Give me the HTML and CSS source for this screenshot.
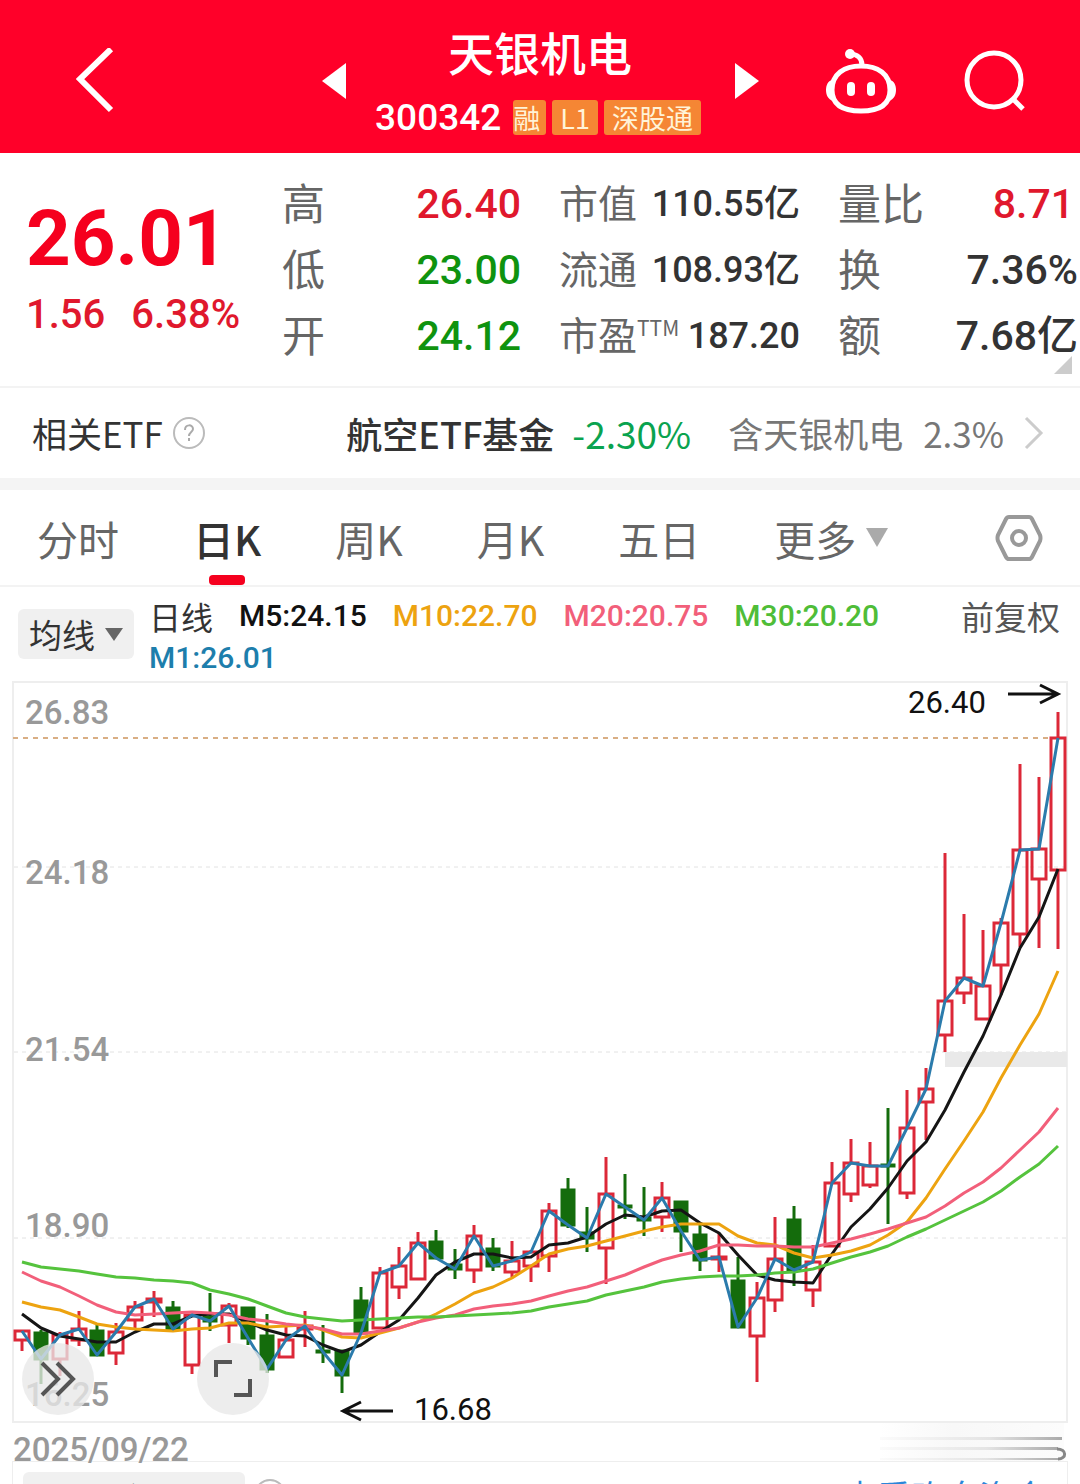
FILE: index.html
```html
<!DOCTYPE html>
<html lang="zh-CN">
<head>
  <meta charset="UTF-8">
  <meta name="viewport" content="width=device-width, initial-scale=1">
  <title>天银机电 300342</title>
  <link rel="stylesheet" href="styles.css">
</head>
<body>

  <header class="topbar">
    <div class="topbar-left">
      <button class="icon-btn" aria-label="返回">
        <svg width="40" height="66" viewBox="0 0 40 66"><path d="M35 1 L4 31 L35 62" fill="none" stroke="#fff" stroke-width="6"/></svg>
      </button>
    </div>
    <button class="icon-btn" aria-label="上一只">
      <svg width="24" height="36" viewBox="0 0 24 36"><path d="M24 0 V36 L0 18 Z" fill="#fff"/></svg>
    </button>
    <div class="stock">
      <h1 class="stock-name">天银机电</h1>
      <div class="stock-code">
        <span class="code">300342</span>
        <span class="badge badge-cut">融</span>
        <span class="badge">L1</span>
        <span class="badge">深股通</span>
      </div>
    </div>
    <button class="icon-btn" aria-label="下一只">
      <svg width="24" height="36" viewBox="0 0 24 36"><path d="M0 0 V36 L24 18 Z" fill="#fff"/></svg>
    </button>
    <div class="topbar-right">
      <button class="icon-btn" aria-label="智能助手">
        <svg width="70" height="68" viewBox="0 0 70 68">
          <path d="M24 7 C31 7 36 11 36 18" fill="none" stroke="#fff" stroke-width="5"/>
          <circle cx="24" cy="7" r="5" fill="#fff"/>
          <path d="M35 19 C52 19 64 27 64 43 C64 58 53 64 35 64 C17 64 6 58 6 43 C6 27 18 19 35 19 Z" fill="none" stroke="#fff" stroke-width="5"/>
          <path d="M6 33 C2 34 0 38 0 43 C0 48 2 52 7 54 Z M64 33 C68 34 70 38 70 43 C70 48 68 52 63 54 Z" fill="#fff"/>
          <rect x="21" y="35" width="8" height="14" rx="4" fill="#fff"/>
          <rect x="41" y="35" width="8" height="14" rx="4" fill="#fff"/>
        </svg>
      </button>
      <button class="icon-btn" aria-label="搜索">
        <svg width="62" height="64" viewBox="0 0 62 64">
          <circle cx="30" cy="31" r="27" fill="none" stroke="#fff" stroke-width="5"/>
          <path d="M48 49 L59 60" stroke="#fff" stroke-width="5"/>
        </svg>
      </button>
    </div>
  </header>

  <section class="quote">
    <div class="price">
      <strong class="price-now">26.01</strong>
      <div class="price-change"><span>1.56</span><span>6.38%</span></div>
    </div>
    <dl class="facts">
      <div><dt>高</dt><dd class="up">26.40</dd></div>
      <div><dt>低</dt><dd class="down">23.00</dd></div>
      <div><dt>开</dt><dd class="down">24.12</dd></div>
    </dl>
    <dl class="facts facts-small">
      <div><dt>市值</dt><dd>110.55亿</dd></div>
      <div><dt>流通</dt><dd>108.93亿</dd></div>
      <div><dt>市盈<sup>TTM</sup></dt><dd>187.20</dd></div>
    </dl>
    <dl class="facts">
      <div><dt>量比</dt><dd class="up ratio">8.71</dd></div>
      <div><dt>换</dt><dd>7.36%</dd></div>
      <div><dt>额</dt><dd>7.68亿</dd></div>
    </dl>
    <span class="corner"></span>
  </section>

  <a class="etf" href="#etf">
    <span class="etf-title">相关ETF
      <svg width="32" height="32" viewBox="0 0 32 32">
        <circle cx="16" cy="16" r="15" fill="none" stroke="#bbb" stroke-width="2"/>
        <path d="M12 13 C12 7 20 7 20 12 C20 15 16 15 16 19 M16 21 V24" fill="none" stroke="#aaa" stroke-width="2"/>
      </svg>
    </span>
    <span class="etf-name">航空ETF基金</span>
    <span class="etf-change">-2.30%</span>
    <span class="etf-hold"><span>含天银机电</span><span>2.3%</span></span>
    <svg class="etf-arrow" width="20" height="34" viewBox="0 0 20 34"><path d="M2 2 L17 17 L2 32" fill="none" stroke="#ccc" stroke-width="3"/></svg>
  </a>

  <nav class="tabs">
    <button class="tab">分时</button>
    <button class="tab active">日K</button>
    <button class="tab">周K</button>
    <button class="tab">月K</button>
    <button class="tab">五日</button>
    <button class="tab">更多
      <svg width="22" height="19" viewBox="0 0 22 19"><path d="M0 0 H22 L11 19 Z" fill="#aaa"/></svg>
    </button>
    <button class="icon-btn settings" aria-label="设置">
      <svg width="48" height="48" viewBox="0 0 48 48" fill="none" stroke="#999" stroke-width="4">
        <path d="M14 3 H34 Q36 3 37 5 L45 21 Q46 24 45 27 L37 43 Q36 45 34 45 H14 Q12 45 11 43 L3 27 Q2 24 3 21 L11 5 Q12 3 14 3 Z"/>
        <circle cx="24" cy="24" r="7"/>
      </svg>
    </button>
  </nav>

  <section class="ma-bar">
    <button class="ma-select">均线
      <svg width="18" height="13" viewBox="0 0 18 13"><path d="M0 0 H18 L9 13 Z" fill="#666"/></svg>
    </button>
    <div class="ma-list">
      <span class="ma-period">日线</span>
      <span class="m5">M5:24.15</span>
      <span class="m10">M10:22.70</span>
      <span class="m20">M20:20.75</span>
      <span class="m30">M30:20.20</span>
      <span class="m1">M1:26.01</span>
    </div>
    <button class="adjust">前复权</button>
  </section>

  <section class="chart-box">
    <svg class="chart" id="chart" viewBox="0 682 1080 741" role="img" aria-label="日K线图"></svg>
    <button class="float-btn float-more" aria-label="展开">
      <svg width="36" height="36" viewBox="0 0 36 36"><path d="M2 2 L18 18 L2 34 M17 2 L33 18 L17 34" fill="none" stroke="#555" stroke-width="4"/></svg>
    </button>
    <button class="float-btn float-full" aria-label="全屏">
      <svg width="38" height="38" viewBox="0 0 38 38"><path d="M2 17 V2 H18 M36 19 V35 H20" fill="none" stroke="#555" stroke-width="4"/></svg>
    </button>
  </section>

  <div class="date-row">
    <span>2025/09/22</span>
    <svg width="188" height="38" viewBox="0 0 188 38">
      <defs>
        <linearGradient id="haze"><stop offset="0" stop-color="#fff"/><stop offset="0.4" stop-color="#f8f8f8"/><stop offset="1" stop-color="#fcfcfc"/></linearGradient>
        <linearGradient id="streak"><stop offset="0" stop-color="#fbfbfb"/><stop offset="0.6" stop-color="#e4e4e4"/><stop offset="1" stop-color="#aaa"/></linearGradient>
      </defs>
      <rect width="184" height="38" fill="url(#haze)"/>
      <rect y="14" width="182" height="3" fill="url(#streak)"/>
      <rect y="24" width="178" height="3" fill="url(#streak)"/>
      <rect y="35" width="178" height="2" fill="url(#streak)"/>
      <path d="M177 26 C187 26 187 36 178 36" fill="none" stroke="#888" stroke-width="3"/>
    </svg>
  </div>

  <section class="volume">
    <button class="volume-select">成交量</button>
    <svg width="34" height="34" viewBox="0 0 34 34"><circle cx="17" cy="17" r="15" fill="none" stroke="#bbb" stroke-width="2"/></svg>
    <a class="volume-link" href="#funds">查看昨息资金</a>
  </section>

  <script src="chart.js"></script>
</body>
</html>
```
FILE: styles.css
```css
* {
  box-sizing: border-box;
}
body {
  margin: 0;
  height: 100vh;
  overflow: hidden;
  background-color: #fff;
  color: #333;
  font-family: "Noto Sans CJK SC", sans-serif;
}
button {
  border: none;
  background: none;
  padding: 0;
  color: inherit;
  font: inherit;
  cursor: pointer;
}
a {
  color: inherit;
  text-decoration: none;
}
svg {
  display: block;
}
.up {
  color: #e0182d;
}
.down {
  color: #0f930f;
}

/* top bar */
.topbar {
  display: grid;
  grid-template-columns: 1fr 48px 365px 48px 1fr;
  align-items: center;
  height: 153px;
  padding-top: 8px;
  background-color: #ff0029;
  color: #fff;
}
.icon-btn {
  display: flex;
  align-items: center;
  justify-content: center;
}
.topbar-left {
  padding-left: 76px;
}
.topbar-right {
  display: flex;
  align-items: center;
  justify-content: flex-end;
  gap: 68px;
  padding-right: 54px;
}
.stock {
  display: flex;
  flex-direction: column;
  align-items: center;
  gap: 24px;
}
.stock-name {
  margin: 0;
  font-size: 46px;
  font-weight: 500;
  line-height: 50px;
}
.stock-code {
  display: flex;
  align-items: center;
  gap: 6px;
  margin-right: 4px;
}
.code {
  margin-right: 6px;
  font-family: Roboto, sans-serif;
  font-size: 37px;
  font-weight: 500;
  line-height: 36px;
}
.badge {
  padding: 0 8px;
  border-radius: 3px;
  background-color: #f58634;
  color: #fff3d8;
  font-size: 27px;
  line-height: 35px;
}
.badge-cut {
  padding: 0 6px 0 0;
}

/* quote */
.quote {
  position: relative;
  display: grid;
  grid-template-columns: 244fr 239fr 241fr 240fr;
  column-gap: 38px;
  height: 235px;
  padding: 18px 2px 0 0;
  border-bottom: 2px solid #f3f3f3;
}
.price {
  padding: 26px 0 0 26px;
  color: #f5001e;
}
.price-now {
  display: block;
  font-family: Roboto, sans-serif;
  font-size: 78px;
  font-weight: 700;
  line-height: 84px;
}
.price-change {
  display: flex;
  gap: 26px;
  color: #e0182d;
  font-family: Roboto, sans-serif;
  font-size: 40px;
  font-weight: 500;
  line-height: 68px;
}
.facts {
  margin: 0;
  font-size: 43px;
}
.facts div {
  display: flex;
  justify-content: space-between;
  height: 66px;
  white-space: nowrap;
}
.facts dt {
  color: #666;
  line-height: 60px;
}
.facts dd {
  margin: 0;
  font-family: Roboto, "Noto Sans CJK SC", sans-serif;
  font-size: 41px;
  font-weight: 500;
  line-height: 66px;
}
.facts-small {
  font-size: 39px;
}
.facts-small dd {
  font-size: 36px;
}
.facts sup {
  font-size: 21px;
  line-height: 0;
}
.ratio {
  padding-right: 4px;
}
.corner {
  position: absolute;
  right: 8px;
  bottom: 12px;
  border-left: 18px solid transparent;
  border-bottom: 18px solid #ccc;
}

/* related ETF */
.etf {
  display: flex;
  align-items: center;
  height: 102px;
  padding: 0 36px 0 32px;
  border-bottom: 12px solid #f4f4f4;
  font-size: 35px;
  line-height: 50px;
}
.etf-title {
  display: flex;
  align-items: center;
  gap: 10px;
  flex: 1;
}
.etf-name {
  font-size: 36px;
  font-weight: 500;
}
.etf-change {
  margin: 0 37px 0 18px;
  color: #0aa34f;
  font-size: 37px;
}
.etf-hold {
  display: flex;
  gap: 20px;
  color: #777;
}
.etf-arrow {
  margin-left: 20px;
}

/* tabs */
.tabs {
  display: flex;
  gap: 74px;
  height: 97px;
  padding: 0 37px;
  border-bottom: 2px solid #f3f3f3;
}
.tab {
  position: relative;
  display: flex;
  align-items: center;
  gap: 10px;
  color: #666;
  font-size: 41px;
}
.tab.active {
  color: #333;
  font-weight: 500;
}
.tab.active::after {
  content: "";
  position: absolute;
  bottom: 0;
  left: 50%;
  width: 36px;
  height: 10px;
  margin-left: -18px;
  border-radius: 4px;
  background-color: #f5001e;
}
.settings {
  margin-left: auto;
}

/* moving averages */
.ma-bar {
  display: flex;
  align-items: flex-start;
  gap: 15px;
  height: 95px;
  padding: 8px 20px 0 18px;
}
.ma-select {
  display: flex;
  align-items: center;
  justify-content: center;
  gap: 10px;
  width: 116px;
  height: 50px;
  margin-top: 14px;
  border-radius: 6px;
  background-color: #f0f0f0;
  font-size: 33px;
}
.ma-list {
  display: flex;
  flex: 1;
  flex-wrap: wrap;
  column-gap: 26px;
  font-family: Roboto, sans-serif;
  font-size: 30px;
  font-weight: 500;
  line-height: 42px;
}
.ma-period {
  font-family: "Noto Sans CJK SC", sans-serif;
  font-size: 32px;
  font-weight: 400;
}
.m5 { color: #111; }
.m10 { color: #eda310; }
.m20 { color: #f25f7a; }
.m30 { color: #4fbd38; }
.m1 { color: #1d7eac; }
.adjust {
  color: #555;
  font-size: 33px;
  line-height: 42px;
}

/* chart */
.chart-box {
  position: relative;
}
.chart {
  width: 100%;
  overflow: visible;
}
.frame {
  fill: none;
  stroke: #eee;
  stroke-width: 2;
}
.grid {
  stroke: #e2e2e2;
  stroke-width: 1;
  stroke-dasharray: 4 4;
}
.last-price {
  stroke: #d9ae84;
  stroke-width: 2;
  stroke-dasharray: 5 5;
}
.gap-zone {
  fill: #e9e9e9;
}
.axis-label {
  fill: #999;
  font-family: Roboto, sans-serif;
  font-size: 33px;
  font-weight: 500;
}
.mark-label {
  fill: #111;
  font-family: Roboto, sans-serif;
  font-size: 31px;
}
.arrow {
  fill: none;
  stroke: #111;
  stroke-width: 3;
}
.candle-up {
  fill: none;
  stroke: #dc2838;
  stroke-width: 3;
}
.candle-down {
  fill: #146c0c;
  stroke: #146c0c;
  stroke-width: 3;
}
.line {
  fill: none;
  stroke-width: 3;
  stroke-linejoin: round;
}
.line-m1 { stroke: #2b7bac; }
.line-m5 { stroke: #151515; }
.line-m10 { stroke: #eda310; }
.line-m20 { stroke: #f25f7a; }
.line-m30 { stroke: #55c33d; }
.float-btn {
  position: absolute;
  bottom: 8px;
  display: flex;
  align-items: center;
  justify-content: center;
  width: 72px;
  height: 72px;
  border-radius: 50%;
  background-color: rgba(232, 232, 232, 0.78);
}
.float-more {
  left: 22px;
}
.float-full {
  left: 197px;
}

/* date and volume */
.date-row {
  display: flex;
  justify-content: space-between;
  height: 38px;
  padding: 0 12px 0 13px;
  color: #999;
  font-family: Roboto, sans-serif;
  font-size: 33px;
  font-weight: 500;
  line-height: 54px;
}
.volume {
  display: flex;
  align-items: flex-start;
  gap: 8px;
  margin: 0 12px;
  padding: 10px 20px 0 10px;
  border: 1px solid #eee;
}
.volume-select {
  width: 222px;
  height: 52px;
  border-radius: 6px;
  background-color: #f0f0f0;
  font-size: 33px;
}
.volume svg {
  margin-top: 6px;
}
.volume-link {
  margin-left: auto;
  color: #2b86d9;
  font-size: 34px;
  line-height: 48px;
}
```
FILE: chart.js
```js
// [direction, high, open/close top, open/close bottom, low] in chart units
const candles = [
  ['u', 1331, 1331, 1340, 1351], ['d', 1330, 1333, 1359, 1384], ['u', 1332, 1335, 1359, 1376],
  ['u', 1311, 1329, 1340, 1346], ['d', 1323, 1331, 1355, 1355], ['u', 1323, 1332, 1353, 1365],
  ['u', 1301, 1307, 1320, 1328], ['u', 1291, 1299, 1302, 1317], ['d', 1301, 1308, 1329, 1331],
  ['u', 1315, 1315, 1365, 1374], ['d', 1293, 1317, 1321, 1331], ['u', 1303, 1306, 1325, 1343],
  ['d', 1308, 1308, 1338, 1345], ['d', 1314, 1336, 1369, 1373], ['u', 1327, 1340, 1357, 1357],
  ['u', 1311, 1326, 1329, 1347], ['d', 1325, 1351, 1352, 1363], ['d', 1351, 1351, 1375, 1393],
  ['d', 1287, 1301, 1333, 1333], ['u', 1267, 1273, 1328, 1328], ['u', 1247, 1266, 1287, 1299],
  ['u', 1232, 1243, 1279, 1279], ['d', 1230, 1242, 1258, 1258], ['d', 1249, 1265, 1269, 1279],
  ['u', 1225, 1236, 1270, 1283], ['d', 1238, 1249, 1266, 1271], ['u', 1241, 1261, 1272, 1277],
  ['u', 1250, 1252, 1266, 1282], ['u', 1203, 1211, 1256, 1272], ['d', 1178, 1190, 1225, 1228],
  ['d', 1207, 1233, 1238, 1252], ['u', 1157, 1194, 1248, 1284], ['d', 1174, 1206, 1207, 1219],
  ['d', 1187, 1218, 1220, 1236], ['u', 1182, 1198, 1217, 1232], ['d', 1202, 1202, 1231, 1252],
  ['d', 1224, 1235, 1260, 1271], ['u', 1233, 1257, 1259, 1272], ['d', 1257, 1281, 1327, 1328],
  ['u', 1282, 1298, 1336, 1382], ['u', 1217, 1259, 1300, 1312], ['d', 1206, 1220, 1270, 1286],
  ['u', 1245, 1262, 1290, 1307], ['u', 1162, 1183, 1246, 1246], ['u', 1139, 1163, 1194, 1202],
  ['u', 1142, 1166, 1185, 1188], ['d', 1108, 1165, 1166, 1224], ['u', 1090, 1128, 1193, 1199],
  ['u', 1068, 1089, 1102, 1140], ['u', 853, 1001, 1035, 1052], ['u', 914, 978, 993, 1004],
  ['u', 930, 986, 1019, 1019], ['u', 918, 923, 965, 995], ['u', 764, 850, 934, 947],
  ['u', 777, 849, 879, 948], ['u', 712, 738, 870, 949]
];

// first points of each average, where the window reaches back before the first candle
const m5Start = [1314, 1328, 1336, 1339];
const m10Start = [1302, 1307, 1310, 1317, 1324, 1327, 1329, 1330, 1331];
const m20Start = [1272, 1281, 1287, 1296, 1305, 1312, 1315, 1314, 1313, 1312, 1313, 1315, 1319, 1321, 1324, 1326, 1329, 1334, 1334];
const m30Start = [1262, 1267, 1269, 1271, 1274, 1277, 1278, 1280, 1281, 1283, 1290, 1294, 1299, 1306, 1313, 1317, 1319, 1321, 1320, 1319, 1318, 1317, 1317, 1316, 1315, 1314, 1313, 1311, 1307];

const closes = candles.map(c => c[0] === 'u' ? c[2] : c[3]);
const xAt = i => Math.round(22 + i * 1036 / 55);

function average(days, start) {
  return closes.map((c, i) => {
    if (i < days - 1) return start[i];
    const part = closes.slice(i - days + 1, i + 1);
    return Math.round(part.reduce((a, b) => a + b, 0) / days);
  });
}

function line(values, name) {
  const points = values.map((y, i) => `${xAt(i)},${y}`).join(' ');
  return `<polyline class="line line-${name}" points="${points}"/>`;
}

function candle(c, i) {
  const [dir, high, top, bottom, low] = c;
  const x = xAt(i);
  const cls = dir === 'u' ? 'candle-up' : 'candle-down';
  const half = dir === 'u' ? 7 : 6;
  return `<g class="${cls}"><path d="M${x} ${high}V${top}M${x} ${bottom}V${low}"/>` +
    `<rect x="${x - half}" y="${top}" width="${half * 2}" height="${bottom - top}"/></g>`;
}

const labels = [['26.83', 724], ['24.18', 884], ['21.54', 1061], ['18.90', 1237], ['16.25', 1406]];

document.getElementById('chart').innerHTML = `
  <rect class="frame" x="13" y="682" width="1054" height="740"/>
  <path class="grid" d="M14 867H1066M14 1052H1066M14 1238H1066"/>
  <path class="last-price" d="M13 738H1052"/>
  <rect class="gap-zone" x="945" y="1052" width="122" height="15"/>
  ${labels.map(l => `<text class="axis-label" x="25" y="${l[1]}">${l[0]}</text>`).join('')}
  ${candles.map(candle).join('')}
  ${line(average(5, m5Start), 'm5')}
  ${line(average(10, m10Start), 'm10')}
  ${line(average(20, m20Start), 'm20')}
  ${line(average(30, m30Start), 'm30')}
  ${line(closes, 'm1')}
  <text class="mark-label" x="908" y="713">26.40</text>
  <path class="arrow" d="M1008 694H1058M1040 685L1058 694L1040 703"/>
  <text class="mark-label" x="414" y="1420">16.68</text>
  <path class="arrow" d="M393 1411H343M361 1402L343 1411L361 1420"/>
`;
```
